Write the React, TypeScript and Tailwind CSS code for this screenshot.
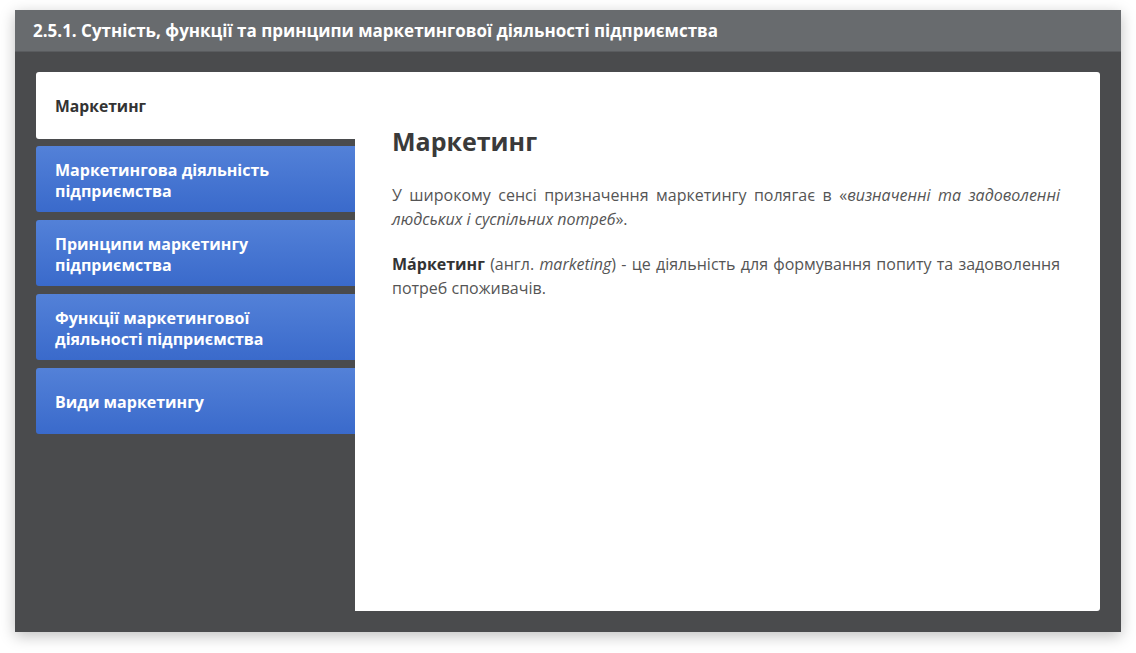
import React from "react";

const tabs = [
  ["Маркетингова діяльність", "підприємства"],
  ["Принципи маркетингу", "підприємства"],
  ["Функції маркетингової", "діяльності підприємства"],
  ["Види маркетингу"],
];

export default function App() {
  return (
    <div className="w-[1136px] h-[653px] bg-white pt-[10px] pl-[15px]" style={{ fontFamily: '"Open Sans", "Noto Sans", sans-serif' }}>
      <div className="w-[1106px] h-[622px] bg-[#4a4b4d] flex flex-col shadow-[0_4px_14px_rgba(0,0,0,0.25)]">
        <div className="h-[42px] bg-[#686b6e] flex items-center pl-[18px] text-white font-bold text-[17px] border-b border-[#5a5c5f]">
          2.5.1. Сутність, функції та принципи маркетингової діяльності підприємства
        </div>
        <div className="flex-1 flex pt-[20px] pl-[21px] pr-[21px] pb-[21px]">
          <div className="w-[319px] flex flex-col gap-[8px]">
            <div className="h-[67px] -mb-[1px] bg-white rounded-l-[3px] flex items-center pl-[19px] pt-[2px] text-[15.7px] font-bold text-[#333]">
              Маркетинг
            </div>
            {tabs.map((t, i) => (
              <div
                key={i}
                className="h-[66px] rounded-l-[3px] flex flex-col justify-center pl-[19px] pt-[3px] text-white font-bold text-[16px] leading-[21px] bg-gradient-to-b from-[#5381d8] to-[#3a6acb]"
              >
                {t.map((l, j) => (
                  <div key={j}>{l}</div>
                ))}
              </div>
            ))}
          </div>
          <div className="flex-1 bg-white rounded-r-[3px] pl-[37px] pr-[40px] pt-[51px]">
            <h1 className="text-[25px] font-bold text-[#3a3a3a] leading-[36px] mb-[24px]">Маркетинг</h1>
            <p className="text-[16px] leading-[24px] text-[#555] text-justify mb-[21px]">
              У широкому сенсі призначення маркетингу полягає в «<i>визначенні та задоволенні людських і суспільних потреб</i>».
            </p>
            <p className="text-[16px] leading-[24px] text-[#555] text-justify">
              <b className="text-[#333]">Ма́ркетинг</b> (англ. <i>marketing</i>) - це діяльність для формування попиту та задоволення потреб споживачів.
            </p>
          </div>
        </div>
      </div>
    </div>
  );
}
